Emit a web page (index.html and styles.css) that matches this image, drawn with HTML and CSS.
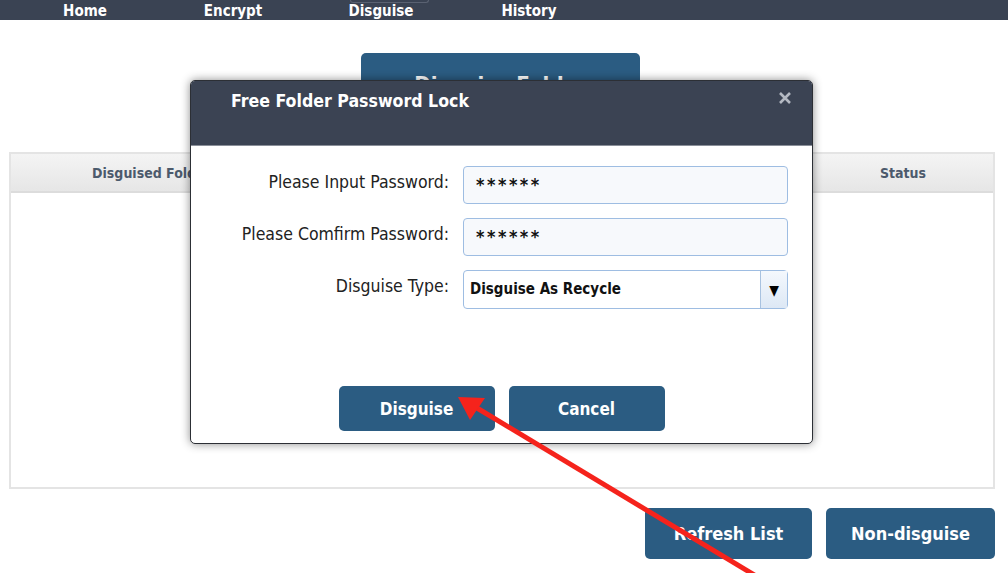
FILE: index.html
```html
<!DOCTYPE html>
<html>
<head>
<meta charset="utf-8">
<link rel="stylesheet" href="styles.css">
</head>
<body>
<div class="page">
  <nav class="nav">
    <span class="nav-item">Home</span>
    <span class="nav-item">Encrypt</span>
    <span class="nav-item active">Disguise</span>
    <span class="nav-item">History</span>
  </nav>
  <main class="main">
    <div class="top-action">
      <button class="btn big">Disguise Folder</button>
    </div>
    <div class="table">
      <div class="thead">
        <div class="th col-name">Disguised Folder</div>
        <div class="th col-mid"></div>
        <div class="th col-status">Status</div>
      </div>
      <div class="tbody"></div>
    </div>
    <div class="actions">
      <button class="btn action refresh">Refresh List</button>
      <button class="btn action undo">Non-disguise</button>
    </div>
  </main>

  <div class="modal">
    <div class="modal-head">
      <span class="modal-title">Free Folder Password Lock</span>
      <svg class="modal-close" width="14" height="14" viewBox="0 0 14 14">
        <path d="M2 2 L12 12 M12 2 L2 12" stroke="#b4b9c2" stroke-width="2.6" stroke-linecap="butt"/>
      </svg>
    </div>
    <div class="modal-body">
      <div class="form">
        <div class="row">
          <label class="lbl">Please Input Password:</label>
          <div class="field pwd">******</div>
        </div>
        <div class="row">
          <label class="lbl">Please Comfirm Password:</label>
          <div class="field pwd">******</div>
        </div>
        <div class="row">
          <label class="lbl">Disguise Type:</label>
          <div class="field select"><span class="sel-text">Disguise As Recycle</span><span class="sel-arrow">&#9660;</span></div>
        </div>
      </div>
      <div class="modal-buttons">
        <button class="btn dlg">Disguise</button>
        <button class="btn dlg">Cancel</button>
      </div>
    </div>
  </div>

  <svg class="arrow" width="1008" height="573" viewBox="0 0 1008 573">
    <line x1="756" y1="576" x2="472" y2="405" stroke="#f5231c" stroke-width="5"/>
    <polygon points="458,397 485,398 470,420" fill="#f5231c"/>
  </svg>
</div>
</body>
</html>
```

FILE: styles.css
```css
* { box-sizing: border-box; }
html, body { margin: 0; padding: 0; background: #fff; }
body {
  font-family: Tahoma, "DejaVu Sans Condensed", "DejaVu Sans", sans-serif;
  width: 1008px;
  height: 573px;
  overflow: hidden;
}
.page { position: relative; width: 1008px; height: 573px; }

.nav {
  height: 20px;
  background: #3a4353;
  display: flex;
  padding-left: 11px;
  position: relative;
}
.nav-item {
  width: 148px;
  text-align: center;
  color: #fff;
  font-weight: bold;
  font-size: 15px;
  line-height: 14px;
  padding-top: 4px;
  position: relative;
}
.nav-item.active::before {
  content: "";
  position: absolute;
  left: 43px;
  top: 0;
  width: 77px;
  height: 2px;
  border: 1px solid #5a6272;
  border-top: none;
  border-radius: 0 0 3px 3px;
}

.main { padding: 0 13px 0 9px; }
.top-action {
  display: flex;
  justify-content: center;
  padding-top: 33px;
  padding-right: 3px;
}
.btn {
  border: none;
  background: #2b5c82;
  color: #fff;
  font-family: inherit;
  font-weight: bold;
  border-radius: 5px;
  cursor: pointer;
  padding: 0;
}
.btn.big {
  width: 279px;
  height: 62px;
  font-size: 22px;
}

.table {
  margin-top: 37px;
  height: 337px;
  border: 2px solid #e4e4e4;
  display: flex;
  flex-direction: column;
}
.thead {
  height: 39px;
  display: grid;
  grid-template-columns: 281px 1fr 180px;
  background: linear-gradient(#f4f4f4, #e6e6e6);
  border-bottom: 2px solid #dcdcdc;
}
.th {
  display: flex;
  align-items: center;
  justify-content: center;
  color: #4c5a6c;
  font-weight: bold;
  font-size: 14px;
}
.tbody { flex: 1; }

.actions {
  display: flex;
  justify-content: flex-end;
  gap: 14px;
  margin-top: 19px;
}
.btn.action {
  height: 51px;
  font-size: 18px;
}
.btn.refresh { width: 167px; }
.btn.undo { width: 169px; }

.modal {
  position: absolute;
  left: 190px;
  top: 80px;
  width: 623px;
  height: 364px;
  background: #fff;
  border: 1px solid #2c2f35;
  border-radius: 5px;
  box-shadow: 0 0 10px rgba(0,0,0,0.45);
  overflow: hidden;
  display: flex;
  flex-direction: column;
}
.modal-head {
  height: 65px;
  background: #3b4353;
  border-bottom: 1px solid #8a8f99;
  position: relative;
  padding: 10px 40px;
}
.modal-title {
  color: #fff;
  font-weight: bold;
  font-size: 17.6px;
}
.modal-close {
  position: absolute;
  right: 20px;
  top: 10px;
}
.modal-body {
  flex: 1;
  display: flex;
  flex-direction: column;
  padding: 20px 0 12px;
}
.form { display: flex; flex-direction: column; gap: 14px; }
.row {
  display: flex;
  align-items: center;
  gap: 14px;
}
.lbl {
  width: 258px;
  text-align: right;
  font-size: 17.5px;
  color: #222;
  padding-bottom: 7px;
}
.field {
  width: 325px;
  height: 38px;
  background: #f7f9fc;
  border: 1px solid #9ebde2;
  border-radius: 4px;
  font-weight: bold;
  color: #111;
}
.field.pwd {
  font-size: 18px;
  letter-spacing: 2.5px;
  padding: 8px 12px 0;
  line-height: 20px;
}
.field.select {
  height: 39px;
  background: #fff;
  display: flex;
  align-items: stretch;
  padding: 0;
}
.sel-text {
  flex: 1;
  padding: 9px 6px;
  font-size: 15px;
}
.sel-arrow {
  width: 27px;
  border-left: 1px solid #a8c2e0;
  background: linear-gradient(#f4f8fd, #dde8f5);
  display: flex;
  align-items: center;
  justify-content: center;
  font-size: 14px;
  color: #000;
}
.modal-buttons {
  margin-top: auto;
  display: flex;
  justify-content: center;
  gap: 14px;
}
.btn.dlg {
  width: 156px;
  height: 45px;
  font-size: 17px;
}

.arrow {
  position: absolute;
  left: 0;
  top: 0;
  pointer-events: none;
}
```
